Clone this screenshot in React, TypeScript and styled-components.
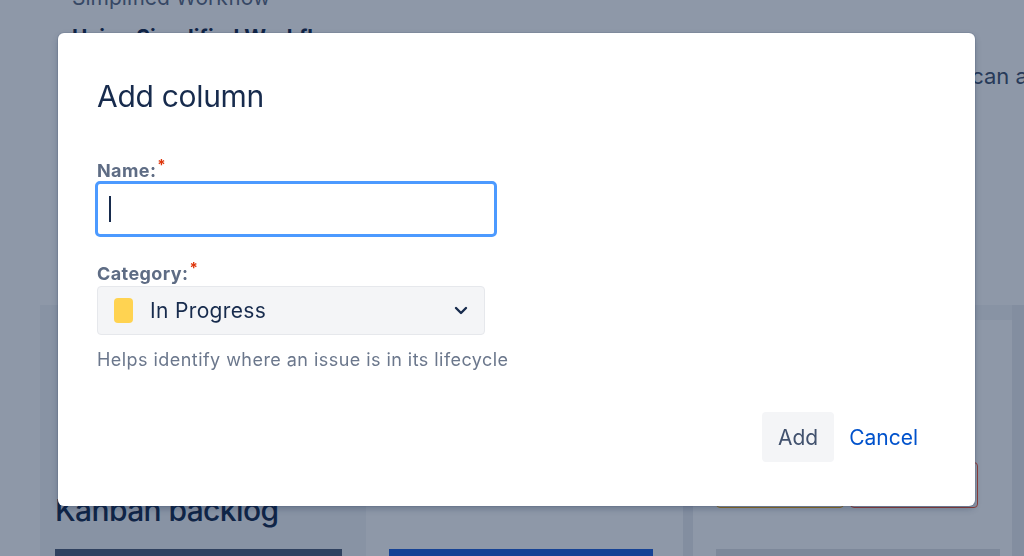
import React from "react";
import styled, { createGlobalStyle } from "styled-components";

const Global = createGlobalStyle`
  html, body { margin: 0; padding: 0; }
  body {
    width: 1024px;
    height: 556px;
    overflow: hidden;
    background: #ffffff;
    font-family: Inter, "Noto Sans", "Liberation Sans", sans-serif;
    -webkit-font-smoothing: antialiased;
  }
  * { box-sizing: border-box; }
`;

/* ---------- background page ---------- */

const Page = styled.div`
  position: relative;
  width: 1024px;
  height: 556px;
  overflow: hidden;
  background: #ffffff;
  display: flex;
  flex-direction: column;
`;

const Intro = styled.section`
  padding-left: 72px;
  height: 305px;
  display: flex;
  flex-direction: column;
`;

const Crumb = styled.div`
  margin-top: -16px;
  font-size: 21px;
  line-height: 28px;
  color: #5e6c84;
  white-space: nowrap;
`;

const IntroTitle = styled.h2`
  margin: 12px 0 0;
  font-size: 21px;
  line-height: 28px;
  font-weight: 700;
  color: #172b4d;
  white-space: nowrap;
`;

const IntroText = styled.p`
  margin: 9px 0 0;
  font-size: 22px;
  line-height: 30px;
  color: #42526e;
  white-space: nowrap;
`;

const Board = styled.div`
  flex: 1;
  display: flex;
  padding-left: 40px;
`;

const Column = styled.div<{ $w: number; $bg: string; $pad: number }>`
  width: ${(p) => p.$w}px;
  flex: none;
  background: ${(p) => p.$bg};
  padding: 0 ${(p) => p.$pad}px;
  display: flex;
  flex-direction: column;
`;

const Strip = styled.div<{ $w: number }>`
  width: ${(p) => p.$w}px;
  flex: none;
  background: #ebecf0;
`;

const ColumnBand = styled.div`
  height: 15px;
  margin: 0 -23px;
  background: #f4f5f7;
`;

const BacklogTitle = styled.h1`
  margin: 186px 0 0;
  font-size: 30px;
  line-height: 38px;
  font-weight: 500;
  letter-spacing: -0.6px;
  color: #172b4d;
  white-space: nowrap;
`;

const Bar = styled.div<{ $color: string; $w: number }>`
  margin-top: auto;
  width: ${(p) => p.$w}px;
  height: 7px;
  background: ${(p) => p.$color};
`;

const LozengeRow = styled.div`
  margin-top: 142px;
  display: flex;
  gap: 6px;
`;

const Outline = styled.div<{ $color: string }>`
  width: 128px;
  height: 46px;
  border: 1px solid ${(p) => p.$color};
  border-radius: 4px;
`;

const Blanket = styled.div`
  position: fixed;
  inset: 0;
  background: rgba(9, 30, 66, 0.46);
  display: flex;
  align-items: flex-start;
  padding: 33px 0 0 58px;
`;

/* ---------- modal ---------- */

const Dialog = styled.div`
  width: 917px;
  height: 473px;
  background: #ffffff;
  border-radius: 6px;
  box-shadow: 0 0 0 1px rgba(9, 30, 66, 0.08), 0 3px 6px rgba(9, 30, 66, 0.25);
  padding: 45px 0 0 39px;
  display: flex;
  flex-direction: column;
`;

const Title = styled.h1`
  margin: 0;
  font-size: 30px;
  line-height: 36px;
  font-weight: 400;
  color: #172b4d;
  letter-spacing: -0.3px;
`;

const Label = styled.label<{ $top: number }>`
  display: block;
  margin-top: ${(p) => p.$top}px;
  font-size: 18px;
  line-height: 20px;
  font-weight: 700;
  letter-spacing: 0.4px;
  color: #5e6c84;
`;

const Required = styled.span`
  color: #de350b;
  font-size: 15px;
  vertical-align: 7px;
  margin-left: 1px;
`;

const TextField = styled.div`
  width: 402px;
  height: 56px;
  margin-left: -2px;
  border: 3px solid #4c9aff;
  border-radius: 5px;
  background: #ffffff;
  display: flex;
  align-items: center;
  padding-left: 11px;
`;

const Caret = styled.span`
  width: 2px;
  height: 26px;
  background: #172b4d;
  flex: none;
`;

const TextInput = styled.input`
  flex: 1;
  border: 0;
  outline: none;
  background: transparent;
  font: inherit;
  font-size: 21px;
  color: #172b4d;
  caret-color: transparent;
  padding: 0;
  height: 100%;
`;

const Select = styled.div`
  width: 388px;
  height: 49px;
  margin-top: 2px;
  background: #f4f5f7;
  border: 1px solid #e6e8ec;
  border-radius: 4px;
  display: flex;
  align-items: center;
  padding: 0 16px 0 16px;
`;

const Swatch = styled.span`
  width: 19px;
  height: 25px;
  border-radius: 4px;
  background: #ffd351;
  flex: none;
`;

const SelectValue = styled.span`
  margin-left: 17px;
  flex: 1;
  font-size: 21px;
  line-height: 26px;
  letter-spacing: 0.35px;
  color: #172b4d;
`;

const Helper = styled.div`
  margin-top: 13px;
  font-size: 18px;
  line-height: 24px;
  letter-spacing: 0.45px;
  color: #6b778c;
`;

const Footer = styled.div`
  margin-top: auto;
  margin-bottom: 44px;
  padding-right: 57px;
  display: flex;
  justify-content: flex-end;
  align-items: center;
  gap: 15px;
`;

const Button = styled.button<{ $link?: boolean }>`
  height: 50px;
  border: 0;
  border-radius: 4px;
  font-family: inherit;
  font-size: 21px;
  font-weight: 400;
  cursor: pointer;
  padding: ${(p) => (p.$link ? "0" : "0 16px")};
  background: ${(p) => (p.$link ? "transparent" : "#f4f5f7")};
  color: ${(p) => (p.$link ? "#0052cc" : "#42526e")};
`;

const Chevron = () => (
  <svg width="14" height="9" viewBox="0 0 14 9" fill="none">
    <path d="M2 2l5 5 5-5" stroke="#172b4d" strokeWidth="2.4" strokeLinecap="round" strokeLinejoin="round" />
  </svg>
);

export default function App() {
  return (
    <>
      <Global />
      <Page>
        <Intro>
          <Crumb>Simplified Workflow</Crumb>
          <IntroTitle>Using Simplified Workflow</IntroTitle>
          <IntroText>
            Simplified Workflow lets you move issues between the columns on your board, so you can add
          </IntroText>
        </Intro>
        <Board>
          <Column $w={326} $bg="#f4f5f7" $pad={15}>
            <BacklogTitle>Kanban backlog</BacklogTitle>
            <Bar $color="#505f79" $w={287} />
          </Column>
          <Column $w={317} $bg="#ffffff" $pad={23}>
            <Bar $color="#2060dc" $w={264} />
          </Column>
          <Strip $w={10} />
          <Column $w={319} $bg="#ffffff" $pad={23}>
            <ColumnBand />
            <LozengeRow>
              <Outline $color="#ffab00" />
              <Outline $color="#ff5630" />
            </LozengeRow>
            <Bar $color="#dfe1e6" $w={284} />
          </Column>
          <Strip $w={12} />
        </Board>
        <Blanket>
          <Dialog role="dialog" aria-labelledby="add-col-title">
            <Title id="add-col-title">Add column</Title>
            <Label $top={41} htmlFor="col-name">
              Name:<Required>*</Required>
            </Label>
            <TextField>
              <Caret />
              <TextInput id="col-name" />
            </TextField>
            <Label $top={21}>
              Category:<Required>*</Required>
            </Label>
            <Select>
              <Swatch />
              <SelectValue>In Progress</SelectValue>
              <Chevron />
            </Select>
            <Helper>Helps identify where an issue is in its lifecycle</Helper>
            <Footer>
              <Button>Add</Button>
              <Button $link>Cancel</Button>
            </Footer>
          </Dialog>
        </Blanket>
      </Page>
    </>
  );
}
